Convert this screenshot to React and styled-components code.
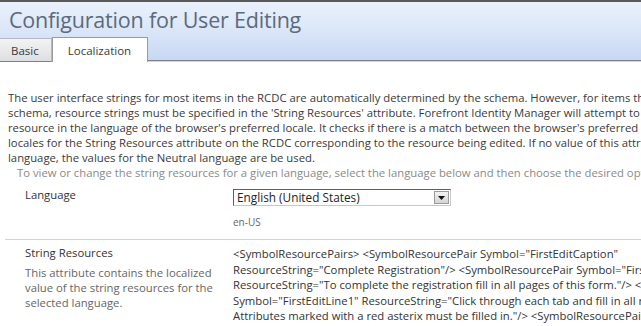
import React from "react";
import styled, { createGlobalStyle } from "styled-components";

const GlobalStyle = createGlobalStyle`
  html, body {
    margin: 0;
    padding: 0;
    background: #ffffff;
    overflow: hidden;
  }
  body {
    font-family: "Open Sans", "Noto Sans", sans-serif;
    font-size: 11.3px;
    color: #3a3a3a;
  }
`;

const Page = styled.div`
  width: 641px;
  height: 326px;
  overflow: hidden;
`;

const Header = styled.header`
  height: 60px;
  border-top: 2px solid #5a5a5a;
  background: linear-gradient(to bottom, #eaf1fc 0%, #dde8f9 40%, #c6d7f3 100%);
  display: flex;
  flex-direction: column;
`;

const Title = styled.h1`
  margin: 0;
  height: 35px;
  padding-left: 9px;
  font-family: "Open Sans", "Noto Sans", sans-serif;
  font-weight: 400;
  font-size: 21.5px;
  letter-spacing: -0.2px;
  line-height: 35px;
  color: #5c6a7c;
  white-space: nowrap;
`;

const TabBar = styled.nav`
  height: 25px;
  display: flex;
  align-items: flex-end;
`;

const Tab = styled.div`
  box-sizing: border-box;
  display: flex;
  align-items: center;
  height: ${(p) => (p.$active ? "25px" : "24px")};
  padding: ${(p) => (p.$active ? "0 16px 0 15px" : "0 12px 0 11px")};
  background: ${(p) =>
    p.$active ? "#ffffff" : "linear-gradient(to bottom, #f3f3f3, #dedfe2)"};
  border-top: 1px solid ${(p) => (p.$active ? "#9a9a9a" : "#b5b8be")};
  border-right: 1px solid ${(p) => (p.$active ? "#9a9a9a" : "#b5b8be")};
  border-bottom: ${(p) => (p.$active ? "none" : "1px solid #7d7f86")};
  border-left: ${(p) => (p.$active ? "1px solid #9a9a9a" : "none")};
  color: #3a3a3a;
  font-size: 11.5px;
  white-space: nowrap;
`;

const TabFiller = styled.div`
  flex: 1;
  height: 1px;
  background: #7d7f86;
  margin-bottom: 1px;
`;

const Intro = styled.section`
  padding: 28px 0 0 8px;
`;

const Line = styled.div`
  white-space: nowrap;
  line-height: 15px;
  color: ${(p) => (p.$muted ? "#8a8a8a" : "#3a3a3a")};
  padding-left: ${(p) => (p.$indent ? "9px" : "0")};
`;

const FieldRow = styled.div`
  display: grid;
  grid-template-columns: 233px 1fr;
  padding: ${(p) => p.$pad};
`;

const LabelCol = styled.div`
  padding-left: 25px;
`;

const FieldLabel = styled.div`
  line-height: 15px;
  color: #333333;
  white-space: nowrap;
`;

const FieldHelp = styled.div`
  margin-top: 5px;
  line-height: 15px;
  color: #666666;
  white-space: nowrap;
`;

const ValueCol = styled.div`
  white-space: nowrap;
  padding-top: ${(p) => p.$offset || "0"};
`;

const SelectBox = styled.div`
  box-sizing: border-box;
  width: 218px;
  height: 17px;
  margin-top: 2px;
  display: flex;
  align-items: center;
  border-top: 1px solid #5f5f5f;
  border-left: 1px solid #5f5f5f;
  border-right: 1px solid #c8c8c8;
  border-bottom: 1px solid #c8c8c8;
  background: #ffffff;
`;

const SelectValue = styled.span`
  flex: 1;
  padding-left: 3px;
  line-height: 15px;
  color: #222222;
  font-size: 11.8px;
`;

const ArrowButton = styled.span`
  box-sizing: border-box;
  width: 15px;
  height: 13px;
  margin-right: 1px;
  display: flex;
  align-items: center;
  justify-content: center;
  border: 1px solid #9b9b9b;
  background: linear-gradient(to bottom, #f2f2f2, #d4d4d4);
`;

const Hint = styled.div`
  margin-top: 10px;
  font-size: 10px;
  line-height: 12px;
  color: #666666;
`;

const Separator = styled.hr`
  margin: 0 0 0 5px;
  border: none;
  border-top: 1px solid #d3d3d3;
`;

const CodeLine = styled.div`
  line-height: 15.5px;
  color: #333333;
  white-space: nowrap;
`;

const introLines = [
  "The user interface strings for most items in the RCDC are automatically determined by the schema. However, for items that are not described by the",
  "schema, resource strings must be specified in the 'String Resources' attribute. Forefront Identity Manager will attempt to display the",
  "resource in the language of the browser's preferred locale. It checks if there is a match between the browser's preferred locale and the",
  "locales for the String Resources attribute on the RCDC corresponding to the resource being edited. If no value of this attribute exists for the",
  "language, the values for the Neutral language are be used.",
];

const resourceLines = [
  '<SymbolResourcePairs> <SymbolResourcePair Symbol="FirstEditCaption"',
  'ResourceString="Complete Registration"/> <SymbolResourcePair Symbol="FirstEditLine0"',
  'ResourceString="To complete the registration fill in all pages of this form."/> <SymbolResourcePair',
  'Symbol="FirstEditLine1" ResourceString="Click through each tab and fill in all required fields.',
  'Attributes marked with a red asterix must be filled in."/> <SymbolResourcePair',
];

export default function App() {
  return (
    <Page>
      <GlobalStyle />
      <Header>
        <Title>Configuration for User Editing</Title>
        <TabBar>
          <Tab>Basic</Tab>
          <Tab $active>Localization</Tab>
          <TabFiller />
        </TabBar>
      </Header>
      <Intro>
        {introLines.map((t, i) => (
          <Line key={i}>{t}</Line>
        ))}
        <Line $muted $indent>
          To view or change the string resources for a given language, select the language below and then choose the desired options.
        </Line>
      </Intro>
      <FieldRow $pad="7px 0 11px 0">
        <LabelCol>
          <FieldLabel>Language</FieldLabel>
        </LabelCol>
        <ValueCol>
          <SelectBox>
            <SelectValue>English (United States)</SelectValue>
            <ArrowButton>
              <svg width="7" height="4" viewBox="0 0 7 4">
                <path d="M0 0 H7 L3.5 4 Z" fill="#111" />
              </svg>
            </ArrowButton>
          </SelectBox>
          <Hint>en-US</Hint>
        </ValueCol>
      </FieldRow>
      <Separator />
      <FieldRow $pad="5px 0 0 0">
        <LabelCol>
          <FieldLabel>String Resources</FieldLabel>
          <FieldHelp>
            This attribute contains the localized
            <br />
            value of the string resources for the
            <br />
            selected language.
          </FieldHelp>
        </LabelCol>
        <ValueCol $offset="1px">
          {resourceLines.map((t, i) => (
            <CodeLine key={i}>{t}</CodeLine>
          ))}
        </ValueCol>
      </FieldRow>
    </Page>
  );
}
